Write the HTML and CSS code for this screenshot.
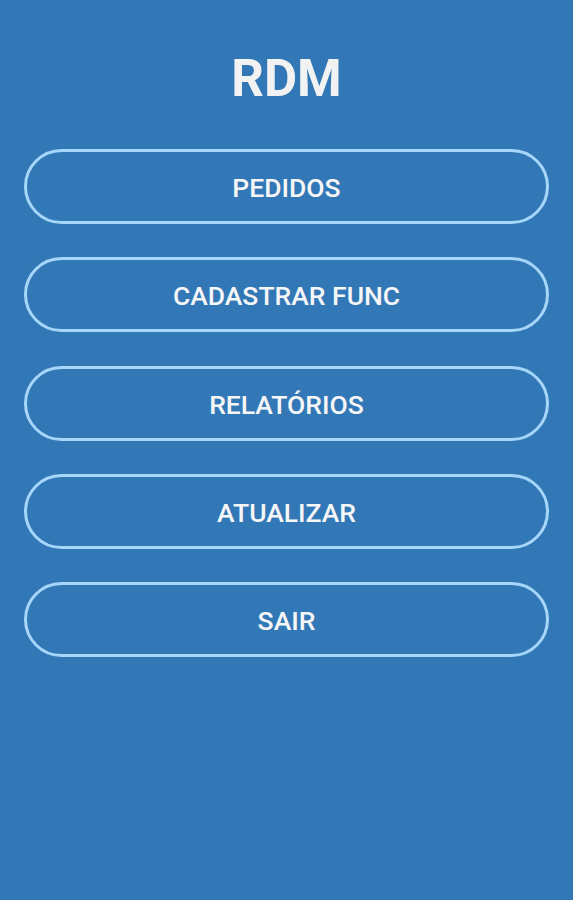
FILE: index.html
```html
<!DOCTYPE html>
<html lang="pt">
<head>
<meta charset="utf-8">
<title>RDM</title>
<link rel="stylesheet" href="styles.css">
</head>
<body>
<main class="screen">
  <h1 class="title">RDM</h1>
  <nav class="menu">
    <button class="menu-btn">PEDIDOS</button>
    <button class="menu-btn">CADASTRAR FUNC</button>
    <button class="menu-btn">RELATÓRIOS</button>
    <button class="menu-btn">ATUALIZAR</button>
    <button class="menu-btn">SAIR</button>
  </nav>
</main>
</body>
</html>
```
FILE: styles.css
```css
html, body {
  margin: 0;
  padding: 0;
  height: 100%;
  background: #3378b6;
}
.screen {
  font-family: Roboto, "Liberation Sans", sans-serif;
  padding: 50px 24px 0;
  display: flex;
  flex-direction: column;
}
.title {
  margin: 0;
  text-align: center;
  color: #f2f2f2;
  font-size: 51px;
  font-weight: 700;
  line-height: 58px;
}
.menu {
  margin-top: 41px;
  display: flex;
  flex-direction: column;
  gap: 33.3px;
}
.menu-btn {
  height: 75px;
  border: 3px solid #a6d6fa;
  border-radius: 38px;
  background: transparent;
  color: #f6f6f6;
  font-family: Roboto, "Liberation Sans", sans-serif;
  font-size: 26.5px;
  font-weight: 500;
  padding: 2px 0 0;
}
```
